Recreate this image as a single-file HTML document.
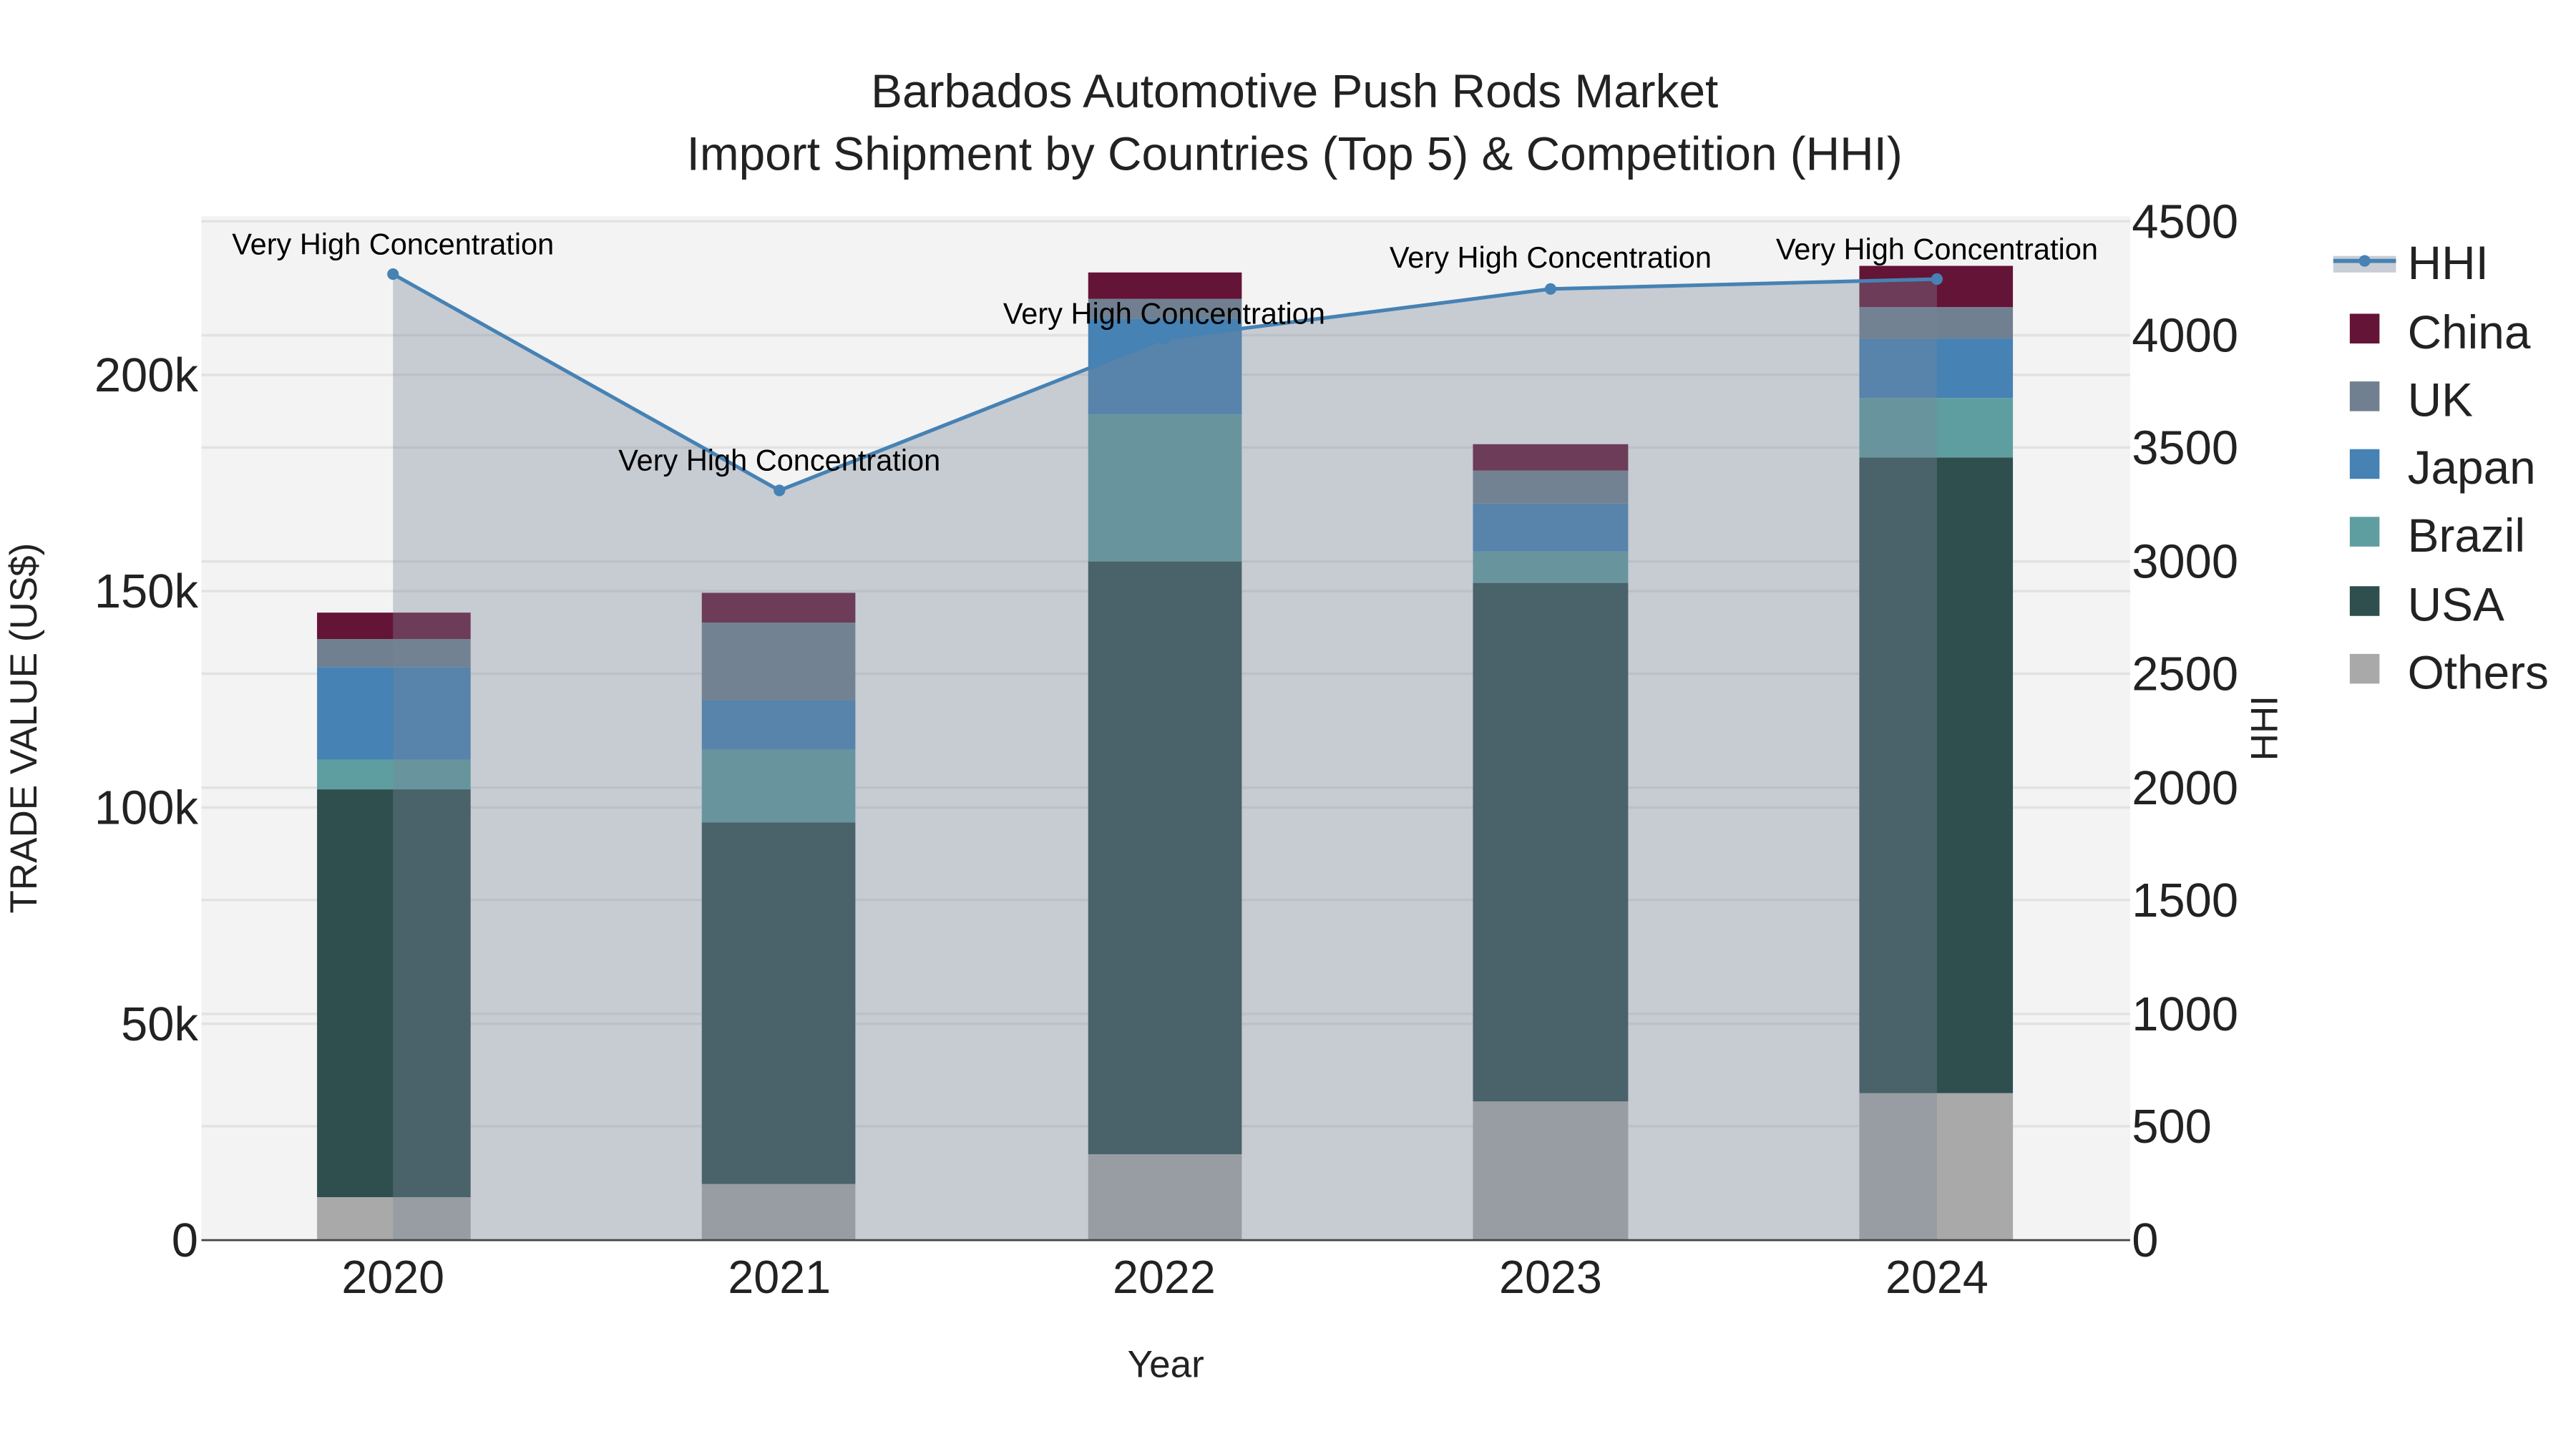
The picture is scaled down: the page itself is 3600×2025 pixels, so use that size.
<!DOCTYPE html>
<html><head><meta charset="utf-8"><style>html,body{margin:0;padding:0;background:#fff}svg{display:block}</style></head><body>
<svg width="3600" height="2025" viewBox="0 0 1560 877.5" xmlns="http://www.w3.org/2000/svg" font-family="Liberation Sans, sans-serif">
<rect x="0" y="0" width="1560" height="877.5" fill="#fff"/>
<rect x="122" y="131" width="1168" height="620" fill="#f3f3f3"/>
<g stroke="#e2e2e2" stroke-width="1.5">
<line x1="122" x2="1290" y1="134" y2="134"/>
<line x1="122" x2="1290" y1="203" y2="203"/>
<line x1="122" x2="1290" y1="227" y2="227"/>
<line x1="122" x2="1290" y1="271" y2="271"/>
<line x1="122" x2="1290" y1="340" y2="340"/>
<line x1="122" x2="1290" y1="358" y2="358"/>
<line x1="122" x2="1290" y1="408" y2="408"/>
<line x1="122" x2="1290" y1="477" y2="477"/>
<line x1="122" x2="1290" y1="489" y2="489"/>
<line x1="122" x2="1290" y1="545" y2="545"/>
<line x1="122" x2="1290" y1="614" y2="614"/>
<line x1="122" x2="1290" y1="620" y2="620"/>
<line x1="122" x2="1290" y1="682" y2="682"/>
</g>
<g>
<rect x="192" y="725" width="93" height="26" fill="#a9a9a9"/>
<rect x="192" y="478" width="93" height="247" fill="#2f4f4f"/>
<rect x="192" y="460" width="93" height="18" fill="#5f9ea0"/>
<rect x="192" y="404" width="93" height="56" fill="#4682b4"/>
<rect x="192" y="387" width="93" height="17" fill="#708090"/>
<rect x="192" y="371" width="93" height="16" fill="#641436"/>

<rect x="425" y="717" width="93" height="34" fill="#a9a9a9"/>
<rect x="425" y="498" width="93" height="219" fill="#2f4f4f"/>
<rect x="425" y="454" width="93" height="44" fill="#5f9ea0"/>
<rect x="425" y="424" width="93" height="30" fill="#4682b4"/>
<rect x="425" y="377" width="93" height="47" fill="#708090"/>
<rect x="425" y="359" width="93" height="18" fill="#641436"/>

<rect x="659" y="699" width="93" height="52" fill="#a9a9a9"/>
<rect x="659" y="340" width="93" height="359" fill="#2f4f4f"/>
<rect x="659" y="251" width="93" height="89" fill="#5f9ea0"/>
<rect x="659" y="193" width="93" height="58" fill="#4682b4"/>
<rect x="659" y="181" width="93" height="12" fill="#708090"/>
<rect x="659" y="165" width="93" height="16" fill="#641436"/>

<rect x="892" y="667" width="94" height="84" fill="#a9a9a9"/>
<rect x="892" y="353" width="94" height="314" fill="#2f4f4f"/>
<rect x="892" y="334" width="94" height="19" fill="#5f9ea0"/>
<rect x="892" y="305" width="94" height="29" fill="#4682b4"/>
<rect x="892" y="285" width="94" height="20" fill="#708090"/>
<rect x="892" y="269" width="94" height="16" fill="#641436"/>

<rect x="1126" y="662" width="93" height="89" fill="#a9a9a9"/>
<rect x="1126" y="277" width="93" height="385" fill="#2f4f4f"/>
<rect x="1126" y="241" width="93" height="36" fill="#5f9ea0"/>
<rect x="1126" y="205" width="93" height="36" fill="#4682b4"/>
<rect x="1126" y="186" width="93" height="19" fill="#708090"/>
<rect x="1126" y="161" width="93" height="25" fill="#641436"/>
</g>
<polygon points="238,751 238,166 472,297 705,205 939,175 1173,169 1173,751" fill="rgb(122,134,152)" fill-opacity="0.36"/>
<polyline points="238,166 472,297 705,205 939,175 1173,169" fill="none" stroke="#4682b4" stroke-width="2.2"/>
<g fill="#4682b4"><circle cx="238" cy="166" r="3.5"/><circle cx="472" cy="297" r="3.5"/><circle cx="705" cy="205" r="3.5"/><circle cx="939" cy="175" r="3.5"/><circle cx="1173" cy="169" r="3.5"/></g>
<line x1="122" x2="1290" y1="751" y2="751" stroke="#444" stroke-width="1.2"/>
<g font-size="18" fill="#000" text-anchor="middle">
<text x="238" y="154">Very High Concentration</text>
<text x="472" y="285">Very High Concentration</text>
<text x="705" y="196">Very High Concentration</text>
<text x="939" y="162">Very High Concentration</text>
<text x="1173" y="157">Very High Concentration</text>
</g>
<g font-size="28.5" fill="#222" text-anchor="middle">
<text x="784" y="65">Barbados Automotive Push Rods Market</text>
<text x="784" y="103">Import Shipment by Countries (Top 5) &amp; Competition (HHI)</text>
</g>
<g font-size="29" fill="#222" text-anchor="end">
<text x="120" y="761">0</text>
<text x="120" y="630">50k</text>
<text x="120" y="499">100k</text>
<text x="120" y="368">150k</text>
<text x="120" y="237">200k</text>
</g>
<g font-size="29" fill="#222" text-anchor="start">
<text x="1291" y="761">0</text>
<text x="1291" y="692">500</text>
<text x="1291" y="624">1000</text>
<text x="1291" y="555">1500</text>
<text x="1291" y="487">2000</text>
<text x="1291" y="418">2500</text>
<text x="1291" y="350">3000</text>
<text x="1291" y="281">3500</text>
<text x="1291" y="213">4000</text>
<text x="1291" y="144">4500</text>
</g>
<g font-size="28" fill="#222" text-anchor="middle">
<text x="238" y="783">2020</text>
<text x="472" y="783">2021</text>
<text x="705" y="783">2022</text>
<text x="939" y="783">2023</text>
<text x="1173" y="783">2024</text>
</g>
<text x="706" y="834" font-size="23" fill="#222" text-anchor="middle">Year</text>
<text transform="translate(22,441) rotate(-90)" font-size="23" fill="#222" text-anchor="middle">TRADE VALUE (US$)</text>
<text transform="translate(1379,441) rotate(-90)" font-size="23" fill="#222" text-anchor="middle">HHI</text>
<rect x="1413" y="155" width="38" height="10" fill="#c9cdd5"/>
<line x1="1413" x2="1451" y1="158" y2="158" stroke="#4682b4" stroke-width="2.5"/>
<circle cx="1432" cy="158" r="3.5" fill="#4682b4"/>
<g>
<rect x="1423" y="190" width="18" height="18" fill="#641436"/>
<rect x="1423" y="231" width="18" height="18" fill="#708090"/>
<rect x="1423" y="272" width="18" height="18" fill="#4682b4"/>
<rect x="1423" y="313" width="18" height="18" fill="#5f9ea0"/>
<rect x="1423" y="355" width="18" height="18" fill="#2f4f4f"/>
<rect x="1423" y="396" width="18" height="18" fill="#a9a9a9"/>
</g>
<g font-size="28.5" fill="#222">
<text x="1458" y="169">HHI</text>
<text x="1458" y="211">China</text>
<text x="1458" y="252">UK</text>
<text x="1458" y="293">Japan</text>
<text x="1458" y="334">Brazil</text>
<text x="1458" y="376">USA</text>
<text x="1458" y="417">Others</text>
</g>
</svg>
</body></html>
